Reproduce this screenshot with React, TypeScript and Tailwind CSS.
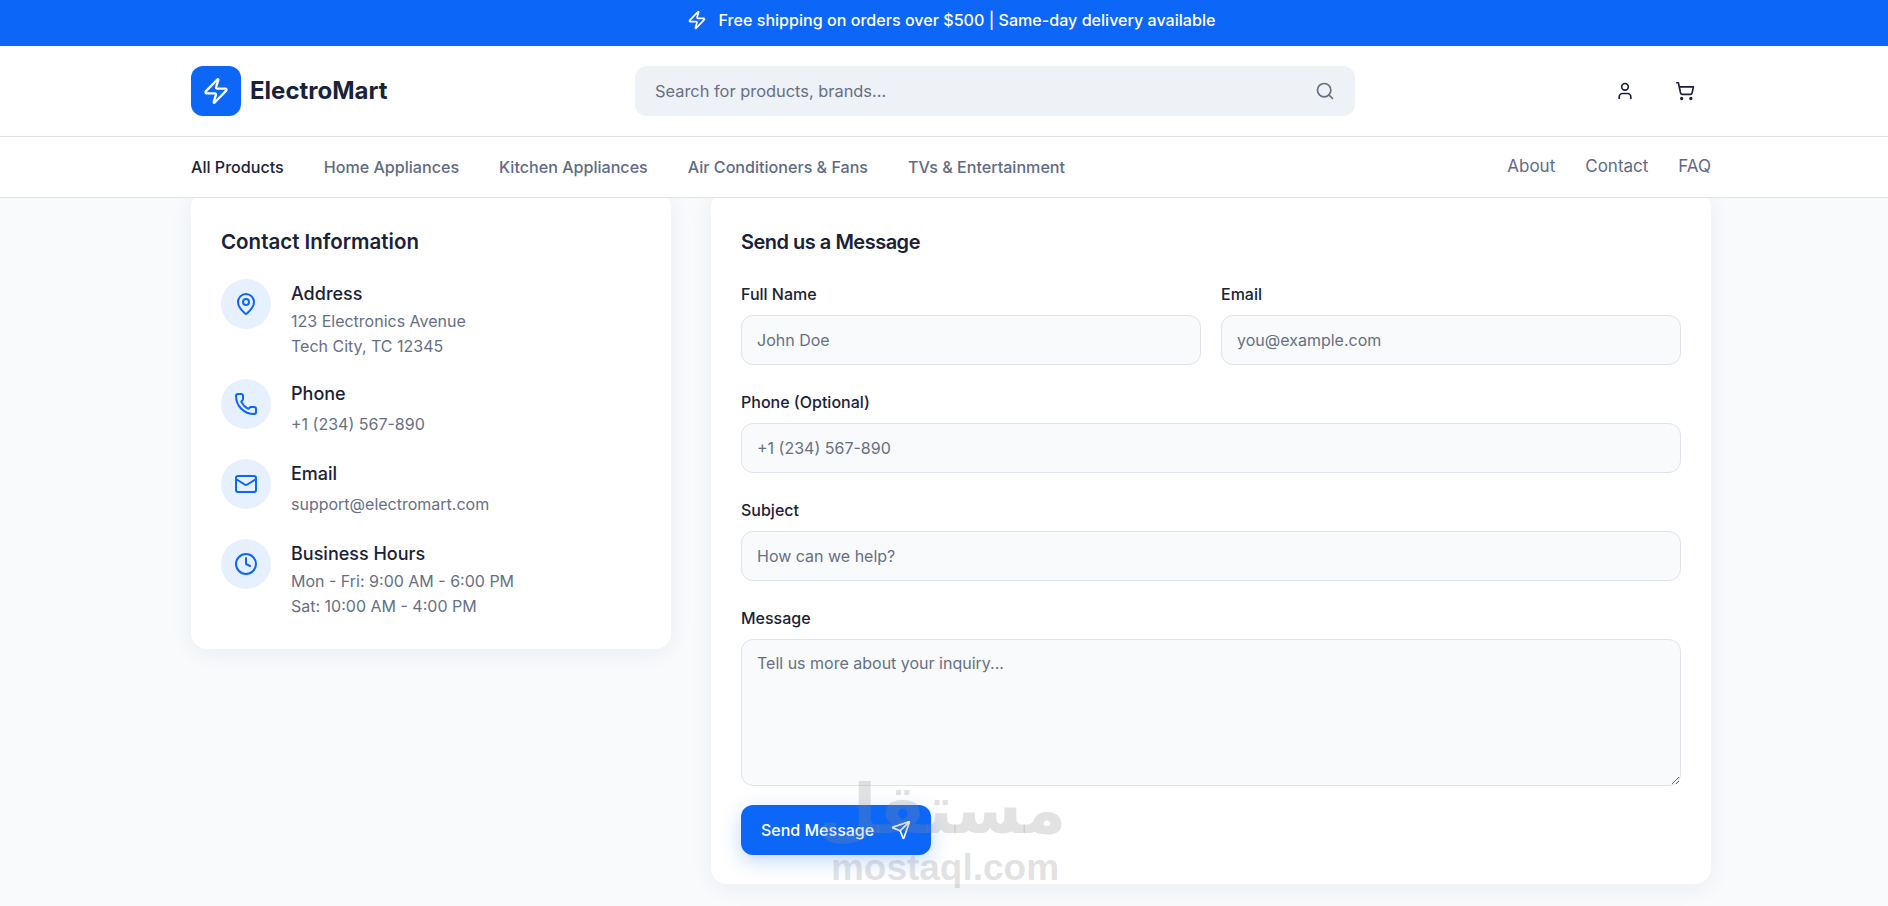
import React from 'react';
import { Clock, Mail, MapPin, Phone, Search, Send, ShoppingCart, User, Zap } from 'lucide-react';

const navLinks = ['Home Appliances', 'Kitchen Appliances', 'Air Conditioners & Fans', 'TVs & Entertainment'];
const pageLinks = ['About', 'Contact', 'FAQ'];

const contactItems = [
  { icon: MapPin, title: 'Address', lines: ['123 Electronics Avenue', 'Tech City, TC 12345'] },
  { icon: Phone, title: 'Phone', lines: ['+1 (234) 567-890'] },
  { icon: Mail, title: 'Email', lines: ['support@electromart.com'] },
  { icon: Clock, title: 'Business Hours', lines: ['Mon - Fri: 9:00 AM - 6:00 PM', 'Sat: 10:00 AM - 4:00 PM'] },
];

const inputClass =
  'w-full h-[50px] rounded-xl border border-[#dfe3ec] bg-[#f8fafc] px-[15px] text-base outline-none placeholder:text-[#667085]';

const Field: React.FC<{ label: string; placeholder: string }> = ({ label, placeholder }) => (
  <label className="block min-w-0 flex-1">
    <span className="mb-2 block text-base font-medium leading-[26px] text-[#1a2238]">{label}</span>
    <input className={inputClass} placeholder={placeholder} />
  </label>
);

const App: React.FC = () => {
  return (
    <div className="relative h-[906px] overflow-hidden bg-[#f8fafc] font-['Inter',sans-serif] text-[#1a2238]">
      <div className="w-[1902px]">
        <div className="flex h-[46px] items-center justify-center gap-3 bg-[#0c67f8] pb-[6px] text-[16.1px] font-medium text-white">
          <Zap size={20} strokeWidth={2} />
          <span>Free shipping on orders over $500 | Same-day delivery available</span>
        </div>

        <header className="relative z-10 bg-white">
          <div className="border-b border-[#dfe3ec]">
            <div className="mx-auto flex h-[90px] w-[1520px] items-center">
              <div className="flex w-[444px] items-center gap-[9px]">
                <div className="flex size-[50px] items-center justify-center rounded-xl bg-[#0c67f8] text-white">
                  <Zap size={28} strokeWidth={2} />
                </div>
                <span className="text-2xl font-bold">ElectroMart</span>
              </div>
              <div className="flex h-[50px] w-[720px] items-center justify-between rounded-xl bg-[#eef1f6] pl-5 pr-[20px] text-[#667085]">
                <span className="text-[16.4px]">Search for products, brands...</span>
                <Search size={20} strokeWidth={2} />
              </div>
              <div className="ml-[260px] flex items-center gap-10">
                <User size={20} strokeWidth={2} />
                <ShoppingCart size={20} strokeWidth={2} />
              </div>
            </div>
          </div>
          <div className="border-b border-[#dfe3ec]">
            <nav className="mx-auto flex h-[60px] w-[1520px] items-center justify-between text-[16.1px] font-medium text-[#5f6b85]">
              <div className="flex items-center gap-10">
                <a className="text-[#1a2238]">All Products</a>
                {navLinks.map((link) => (
                  <a key={link}>{link}</a>
                ))}
              </div>
              <div className="flex items-center gap-[30px] pb-[1px] text-[17px] font-normal">
                {pageLinks.map((link) => (
                  <a key={link}>{link}</a>
                ))}
              </div>
            </nav>
          </div>
        </header>

        <main className="mx-auto -mt-[7px] flex w-[1520px] items-start gap-10">
          <section className="w-[480px] rounded-2xl bg-white px-[30px] pb-[30px] pt-[35px] shadow-[0_4px_24px_rgba(30,50,90,0.06)]">
            <h2 className="mb-[21px] text-[20.5px] font-semibold leading-8">Contact Information</h2>
            <div className="flex flex-col gap-5">
              {contactItems.map((item) => (
                <div key={item.title} className="flex gap-5">
                  <div className="flex size-[50px] shrink-0 items-center justify-center rounded-full bg-[#e7f0fe] text-[#0c67f8]">
                    <item.icon size={24} strokeWidth={2} />
                  </div>
                  <div>
                    <h3 className="text-lg font-medium leading-[30px]">{item.title}</h3>
                    {item.lines.map((line) => (
                      <p
                        key={line}
                        className={`text-base text-[#667085] ${item.lines.length > 1 ? 'leading-[25px]' : 'leading-[30px]'}`}
                      >
                        {line}
                      </p>
                    ))}
                  </div>
                </div>
              ))}
            </div>
          </section>

          <section className="flex-1 rounded-2xl bg-white px-[30px] pb-[29px] pt-[35px] shadow-[0_4px_24px_rgba(30,50,90,0.06)]">
            <h2 className="mb-[23px] text-xl font-semibold leading-8 tracking-[-0.5px]">Send us a Message</h2>
            <form className="flex flex-col gap-6">
              <div className="flex gap-5">
                <Field label="Full Name" placeholder="John Doe" />
                <Field label="Email" placeholder="you@example.com" />
              </div>
              <Field label="Phone (Optional)" placeholder="+1 (234) 567-890" />
              <Field label="Subject" placeholder="How can we help?" />
              <label className="block">
                <span className="mb-2 block text-base font-medium leading-[26px]">Message</span>
                <textarea
                  className="block h-[147px] w-full rounded-xl border border-[#dfe3ec] bg-[#f8fafc] px-[15px] py-[11px] text-base outline-none placeholder:text-[#667085]"
                  placeholder="Tell us more about your inquiry..."
                />
              </label>
              <button
                type="button"
                className="-mt-[5px] flex h-[50px] w-[190px] items-center justify-between rounded-xl bg-[#0c67f8] px-5 text-base font-medium text-white shadow-[0_6px_20px_rgba(12,103,248,0.25)]"
              >
                Send Message
                <Send size={20} strokeWidth={2} />
              </button>
            </form>
          </section>
        </main>
      </div>

      {/* site watermark sits over the form */}
      <div className="pointer-events-none absolute left-[830px] top-[768px] z-20 flex w-[230px] flex-col items-center text-[#8c8c8c]/25">
        <span dir="rtl" className="pr-[6px] font-['DejaVu_Sans',sans-serif] text-[68px] font-bold leading-[84px]">
          مستقل
        </span>
        <span className="-mt-[2px] font-['Liberation_Sans',sans-serif] text-[37px] font-bold leading-[36px]">mostaql.com</span>
      </div>
    </div>
  );
};

export default App;
